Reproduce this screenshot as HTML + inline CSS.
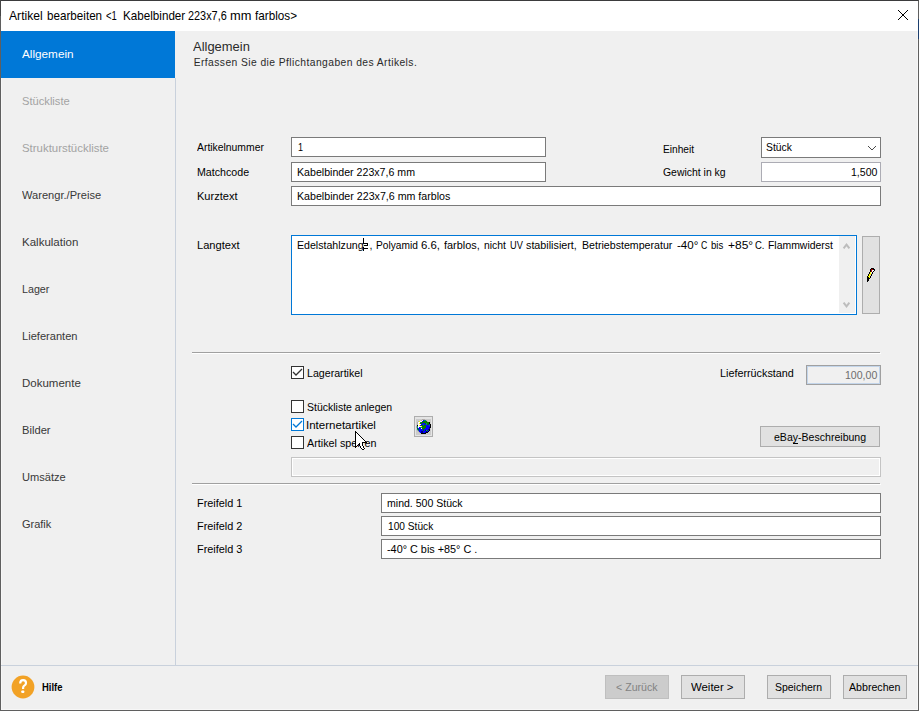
<!DOCTYPE html>
<html><head><meta charset="utf-8">
<style>
html,body{margin:0;padding:0;width:919px;height:711px;overflow:hidden;background:#f0f0f0;font-family:"Liberation Sans",sans-serif;}
.a{position:absolute;box-sizing:border-box;}
.t{position:absolute;white-space:pre;transform-origin:0 0;}
</style></head><body>
<!-- window border -->
<div class="a" style="left:0;top:0;width:919px;height:711px;border:1px solid #5f5f5f;border-top-color:#3b3b3d;background:#f0f0f0"></div>
<div class="a" style="left:0;top:0;width:1px;height:16px;background:#454545"></div>
<div class="a" style="left:1px;top:78px;width:1px;height:632px;background:#f7f7f7"></div>
<div class="a" style="left:917px;top:31px;width:1px;height:679px;background:#f7f7f7"></div>
<div class="a" style="left:1px;top:709px;width:917px;height:1px;background:#f7f7f7"></div>
<div class="a" style="left:918px;top:19px;width:1px;height:20px;background:#1d3f6e"></div>
<!-- title bar -->
<div class="a" style="left:1px;top:1px;width:917px;height:30px;background:#fff"></div>
<!-- close X -->
<svg class="a" style="left:898px;top:10px" width="10" height="10" viewBox="0 0 10 10" shape-rendering="crispEdges"><rect x="0" y="0" width="1" height="1" fill="#000000"/><rect x="9" y="0" width="1" height="1" fill="#000000"/><rect x="1" y="1" width="1" height="1" fill="#000000"/><rect x="8" y="1" width="1" height="1" fill="#000000"/><rect x="2" y="2" width="1" height="1" fill="#000000"/><rect x="7" y="2" width="1" height="1" fill="#000000"/><rect x="3" y="3" width="1" height="1" fill="#000000"/><rect x="6" y="3" width="1" height="1" fill="#000000"/><rect x="4" y="4" width="2" height="1" fill="#000000"/><rect x="4" y="5" width="2" height="1" fill="#000000"/><rect x="3" y="6" width="1" height="1" fill="#000000"/><rect x="6" y="6" width="1" height="1" fill="#000000"/><rect x="2" y="7" width="1" height="1" fill="#000000"/><rect x="7" y="7" width="1" height="1" fill="#000000"/><rect x="1" y="8" width="1" height="1" fill="#000000"/><rect x="8" y="8" width="1" height="1" fill="#000000"/><rect x="0" y="9" width="1" height="1" fill="#000000"/><rect x="9" y="9" width="1" height="1" fill="#000000"/></svg>
<!-- sidebar -->
<div class="a" style="left:1px;top:31px;width:174px;height:47px;background:#0078d7"></div>
<div class="a" style="left:175px;top:78px;width:1px;height:587px;background:#c9d1dc"></div>
<!-- bottom separator -->
<div class="a" style="left:1px;top:665px;width:917px;height:1px;background:#c9d1dc"></div>

<!-- inputs -->
<div class="a" style="left:291px;top:137px;width:255px;height:20px;border:1px solid #7a7a7a;background:#fff"></div>
<div class="a" style="left:291px;top:162px;width:255px;height:20px;border:1px solid #7a7a7a;background:#fff"></div>
<div class="a" style="left:291px;top:186px;width:590px;height:20px;border:1px solid #7a7a7a;background:#fff"></div>
<!-- dropdown -->
<div class="a" style="left:761px;top:137px;width:120px;height:21px;border:1px solid #7a7a7a;background:#fff"></div>
<svg class="a" style="left:868px;top:146px" width="8" height="4" viewBox="0 0 8 4" shape-rendering="crispEdges"><rect x="0" y="0" width="1" height="1" fill="#4a4a4a"/><rect x="7" y="0" width="1" height="1" fill="#4a4a4a"/><rect x="1" y="1" width="1" height="1" fill="#4a4a4a"/><rect x="6" y="1" width="1" height="1" fill="#4a4a4a"/><rect x="2" y="2" width="1" height="1" fill="#4a4a4a"/><rect x="5" y="2" width="1" height="1" fill="#4a4a4a"/><rect x="3" y="3" width="2" height="1" fill="#4a4a4a"/></svg>
<!-- gewicht -->
<div class="a" style="left:761px;top:162px;width:120px;height:20px;border:1px solid #acacb4;background:#fff"></div>
<!-- langtext -->
<div class="a" style="left:291px;top:235px;width:566px;height:80px;border:1px solid #0078d7;background:#fff"></div>
<div class="a" style="left:839px;top:236px;width:16px;height:77px;background:#f0f0f0"></div>
<svg class="a" style="left:839px;top:236px" width="17" height="78" viewBox="0 0 17 78"><path d="M4.6 12.3 L7.5 8.6 L10.4 12.3" stroke="#bdbdbd" stroke-width="2" fill="none"/><path d="M4.6 66.7 L7.5 70.4 L10.4 66.7" stroke="#bdbdbd" stroke-width="2" fill="none"/></svg>
<!-- I-beam -->

<!-- pencil button -->
<div class="a" style="left:862px;top:236px;width:18px;height:78px;border:1px solid #adadad;background:#e1e1e1"></div>
<svg class="a" style="left:867px;top:268px" width="8" height="14" viewBox="0 0 8 14" shape-rendering="crispEdges"><rect x="4" y="0" width="3" height="1" fill="#000000"/><rect x="3" y="1" width="1" height="1" fill="#000000"/><rect x="4" y="1" width="2" height="1" fill="#a00000"/><rect x="6" y="1" width="2" height="1" fill="#000000"/><rect x="3" y="2" width="1" height="1" fill="#000000"/><rect x="4" y="2" width="1" height="1" fill="#a00000"/><rect x="5" y="2" width="2" height="1" fill="#ffffff"/><rect x="7" y="2" width="1" height="1" fill="#000000"/><rect x="3" y="3" width="1" height="1" fill="#000000"/><rect x="4" y="3" width="1" height="1" fill="#a00000"/><rect x="5" y="3" width="1" height="1" fill="#ffffff"/><rect x="6" y="3" width="1" height="1" fill="#000000"/><rect x="2" y="4" width="1" height="1" fill="#000000"/><rect x="3" y="4" width="1" height="1" fill="#ffff00"/><rect x="4" y="4" width="1" height="1" fill="#ffffff"/><rect x="5" y="4" width="1" height="1" fill="#000000"/><rect x="2" y="5" width="1" height="1" fill="#000000"/><rect x="3" y="5" width="1" height="1" fill="#ffff00"/><rect x="4" y="5" width="1" height="1" fill="#c8c8e8"/><rect x="5" y="5" width="1" height="1" fill="#000000"/><rect x="1" y="6" width="1" height="1" fill="#000000"/><rect x="2" y="6" width="2" height="1" fill="#ffff00"/><rect x="4" y="6" width="1" height="1" fill="#000000"/><rect x="1" y="7" width="1" height="1" fill="#000000"/><rect x="2" y="7" width="1" height="1" fill="#ffff00"/><rect x="3" y="7" width="1" height="1" fill="#c8c8e8"/><rect x="4" y="7" width="1" height="1" fill="#000000"/><rect x="0" y="8" width="1" height="1" fill="#000000"/><rect x="1" y="8" width="2" height="1" fill="#ffff00"/><rect x="3" y="8" width="1" height="1" fill="#000000"/><rect x="0" y="9" width="2" height="1" fill="#000000"/><rect x="2" y="9" width="1" height="1" fill="#ffff00"/><rect x="3" y="9" width="1" height="1" fill="#000000"/><rect x="0" y="10" width="3" height="1" fill="#000000"/><rect x="0" y="11" width="2" height="1" fill="#000000"/><rect x="0" y="12" width="2" height="1" fill="#000000"/><rect x="0" y="13" width="1" height="1" fill="#000000"/></svg>

<!-- separator 1 -->
<div class="a" style="left:192px;top:352px;width:688px;height:1px;background:#a0a0a0"></div>
<div class="a" style="left:192px;top:353px;width:689px;height:1px;background:#fff"></div>

<!-- checkboxes -->
<div class="a" style="left:291px;top:366px;width:13px;height:13px;border:1px solid #333;background:#fff"></div>
<svg class="a" style="left:291px;top:366px" width="13" height="13" viewBox="0 0 13 13"><path d="M2 6 L5 9 L11 3" stroke="#333" stroke-width="1.3" fill="none"/></svg>
<div class="a" style="left:291px;top:400px;width:13px;height:13px;border:1px solid #333;background:#fff"></div>
<div class="a" style="left:291px;top:418px;width:13px;height:13px;border:1px solid #0078d7;background:#fff"></div>
<svg class="a" style="left:291px;top:418px" width="13" height="13" viewBox="0 0 13 13"><path d="M2 6 L5 9 L11 3" stroke="#0078d7" stroke-width="1.3" fill="none"/></svg>
<div class="a" style="left:291px;top:436px;width:13px;height:13px;border:1px solid #333;background:#fff"></div>

<!-- globe button -->
<div class="a" style="left:414px;top:416px;width:19px;height:21px;border:1px solid #adadad;background:#e4e4e4"></div><div class="a" style="left:416px;top:419px;width:15px;height:16px;background:#cbcbcb"></div><svg class="a" style="left:416px;top:419px" width="15" height="15" viewBox="0 0 15 15" shape-rendering="crispEdges"><rect x="6" y="0" width="3" height="1" fill="#b0aaa8"/><rect x="5" y="1" width="1" height="1" fill="#b0aaa8"/><rect x="6" y="1" width="1" height="1" fill="#ffffff"/><rect x="7" y="1" width="1" height="1" fill="#0000ff"/><rect x="8" y="1" width="2" height="1" fill="#008080"/><rect x="10" y="1" width="1" height="1" fill="#b0aaa8"/><rect x="2" y="2" width="1" height="1" fill="#b0aaa8"/><rect x="3" y="2" width="1" height="1" fill="#ffff00"/><rect x="4" y="2" width="2" height="1" fill="#ffffff"/><rect x="6" y="2" width="1" height="1" fill="#0000ff"/><rect x="7" y="2" width="4" height="1" fill="#008000"/><rect x="11" y="2" width="1" height="1" fill="#b0aaa8"/><rect x="1" y="3" width="1" height="1" fill="#b0aaa8"/><rect x="2" y="3" width="2" height="1" fill="#ffffff"/><rect x="4" y="3" width="1" height="1" fill="#008080"/><rect x="5" y="3" width="8" height="1" fill="#008000"/><rect x="13" y="3" width="1" height="1" fill="#000000"/><rect x="1" y="4" width="1" height="1" fill="#b0aaa8"/><rect x="2" y="4" width="1" height="1" fill="#ffffff"/><rect x="3" y="4" width="1" height="1" fill="#ffff00"/><rect x="4" y="4" width="2" height="1" fill="#008000"/><rect x="6" y="4" width="3" height="1" fill="#0000ff"/><rect x="9" y="4" width="1" height="1" fill="#008000"/><rect x="10" y="4" width="1" height="1" fill="#008080"/><rect x="11" y="4" width="2" height="1" fill="#008000"/><rect x="13" y="4" width="1" height="1" fill="#000000"/><rect x="1" y="5" width="1" height="1" fill="#b0aaa8"/><rect x="2" y="5" width="3" height="1" fill="#ffffff"/><rect x="5" y="5" width="2" height="1" fill="#0000ff"/><rect x="7" y="5" width="1" height="1" fill="#008080"/><rect x="8" y="5" width="2" height="1" fill="#0000ff"/><rect x="10" y="5" width="1" height="1" fill="#008080"/><rect x="11" y="5" width="2" height="1" fill="#008000"/><rect x="13" y="5" width="1" height="1" fill="#0000ff"/><rect x="14" y="5" width="1" height="1" fill="#000000"/><rect x="1" y="6" width="1" height="1" fill="#000000"/><rect x="2" y="6" width="1" height="1" fill="#ffffff"/><rect x="3" y="6" width="1" height="1" fill="#ffff00"/><rect x="4" y="6" width="1" height="1" fill="#0000ff"/><rect x="5" y="6" width="2" height="1" fill="#008000"/><rect x="7" y="6" width="1" height="1" fill="#0000ff"/><rect x="8" y="6" width="2" height="1" fill="#008000"/><rect x="10" y="6" width="3" height="1" fill="#0000ff"/><rect x="13" y="6" width="1" height="1" fill="#008080"/><rect x="14" y="6" width="1" height="1" fill="#000000"/><rect x="0" y="7" width="1" height="1" fill="#b0aaa8"/><rect x="1" y="7" width="1" height="1" fill="#008080"/><rect x="2" y="7" width="3" height="1" fill="#ffffff"/><rect x="5" y="7" width="1" height="1" fill="#ffff00"/><rect x="6" y="7" width="4" height="1" fill="#008000"/><rect x="10" y="7" width="4" height="1" fill="#0000ff"/><rect x="14" y="7" width="1" height="1" fill="#000000"/><rect x="0" y="8" width="1" height="1" fill="#b0aaa8"/><rect x="1" y="8" width="1" height="1" fill="#008080"/><rect x="2" y="8" width="1" height="1" fill="#ffffff"/><rect x="3" y="8" width="1" height="1" fill="#0000ff"/><rect x="4" y="8" width="2" height="1" fill="#008080"/><rect x="6" y="8" width="4" height="1" fill="#008000"/><rect x="10" y="8" width="3" height="1" fill="#0000ff"/><rect x="13" y="8" width="1" height="1" fill="#000080"/><rect x="14" y="8" width="1" height="1" fill="#000000"/><rect x="1" y="9" width="1" height="1" fill="#008000"/><rect x="2" y="9" width="3" height="1" fill="#0000ff"/><rect x="5" y="9" width="1" height="1" fill="#ffffff"/><rect x="6" y="9" width="3" height="1" fill="#008000"/><rect x="9" y="9" width="4" height="1" fill="#0000ff"/><rect x="13" y="9" width="1" height="1" fill="#000080"/><rect x="1" y="10" width="1" height="1" fill="#008080"/><rect x="2" y="10" width="1" height="1" fill="#008000"/><rect x="3" y="10" width="4" height="1" fill="#0000ff"/><rect x="7" y="10" width="1" height="1" fill="#008000"/><rect x="8" y="10" width="4" height="1" fill="#0000ff"/><rect x="12" y="10" width="1" height="1" fill="#000080"/><rect x="13" y="10" width="1" height="1" fill="#000000"/><rect x="1" y="11" width="1" height="1" fill="#b0aaa8"/><rect x="2" y="11" width="1" height="1" fill="#008080"/><rect x="3" y="11" width="4" height="1" fill="#0000ff"/><rect x="7" y="11" width="1" height="1" fill="#008000"/><rect x="8" y="11" width="1" height="1" fill="#0000ff"/><rect x="9" y="11" width="1" height="1" fill="#000080"/><rect x="10" y="11" width="1" height="1" fill="#008080"/><rect x="11" y="11" width="1" height="1" fill="#008000"/><rect x="12" y="11" width="1" height="1" fill="#0000ff"/><rect x="13" y="11" width="1" height="1" fill="#000000"/><rect x="2" y="12" width="1" height="1" fill="#b0aaa8"/><rect x="3" y="12" width="2" height="1" fill="#0000ff"/><rect x="5" y="12" width="2" height="1" fill="#000080"/><rect x="7" y="12" width="3" height="1" fill="#0000ff"/><rect x="10" y="12" width="1" height="1" fill="#000080"/><rect x="11" y="12" width="1" height="1" fill="#0000ff"/><rect x="12" y="12" width="1" height="1" fill="#000000"/><rect x="3" y="13" width="1" height="1" fill="#b0aaa8"/><rect x="4" y="13" width="1" height="1" fill="#0000ff"/><rect x="5" y="13" width="2" height="1" fill="#000080"/><rect x="7" y="13" width="2" height="1" fill="#0000ff"/><rect x="9" y="13" width="1" height="1" fill="#000080"/><rect x="10" y="13" width="2" height="1" fill="#000000"/><rect x="5" y="14" width="5" height="1" fill="#000000"/></svg>
<!-- lieferrueckstand -->
<div class="a" style="left:806px;top:365px;width:75px;height:20px;border:1px solid #a0a0a0;background:#f0f0f0;box-shadow:inset 0 0 0 1px #c3d5ea"></div>
<!-- ebay button -->
<div class="a" style="left:760px;top:426px;width:120px;height:21px;border:1px solid #adadad;background:#e1e1e1"></div>
<div class="a" style="left:793px;top:443px;width:5px;height:1px;background:#000"></div>
<!-- progress box -->
<div class="a" style="left:291px;top:457px;width:590px;height:20px;border:1px solid #c4c4c4;background:#f0f0f0;box-shadow:inset 0 0 0 1px #fff"></div>
<!-- separator 2 -->
<div class="a" style="left:192px;top:483px;width:688px;height:1px;background:#a0a0a0"></div>
<div class="a" style="left:192px;top:484px;width:689px;height:1px;background:#fff"></div>
<!-- freifeld boxes -->
<div class="a" style="left:381px;top:493px;width:500px;height:20px;border:1px solid #7a7a7a;background:#fff"></div>
<div class="a" style="left:381px;top:516px;width:500px;height:20px;border:1px solid #7a7a7a;background:#fff"></div>
<div class="a" style="left:381px;top:539px;width:500px;height:20px;border:1px solid #7a7a7a;background:#fff"></div>

<!-- help icon -->
<svg class="a" style="left:11px;top:675px" width="24" height="24" viewBox="0 0 24 24"><circle cx="12" cy="12" r="11.4" fill="#f2a226"/><path d="M9.2 8.4 Q9.2 5.2 12.1 5.2 Q15 5.2 15 7.9 Q15 9.6 13.3 10.6 Q12.1 11.3 12.1 12.9 L12.1 13.9" stroke="#fff" stroke-width="2.2" fill="none"/><rect x="10.3" y="15.4" width="3" height="2.6" rx="0.8" fill="#fff"/></svg>

<!-- bottom buttons -->
<div class="a" style="left:605px;top:675px;width:64px;height:24px;border:1px solid #bfbfbf;background:#cccccc"></div>
<div class="a" style="left:681px;top:675px;width:64px;height:24px;border:1px solid #adadad;background:#e1e1e1"></div>
<div class="a" style="left:767px;top:675px;width:64px;height:24px;border:1px solid #adadad;background:#e1e1e1"></div>
<div class="a" style="left:843px;top:675px;width:64px;height:24px;border:1px solid #adadad;background:#e1e1e1"></div>

<div class="t" style="left:9.20px;top:9.75px;font-size:12.1px;line-height:12.1px;color:#000;font-weight:400;transform:scaleX(1.0026);">Artikel</div>
<div class="t" style="left:47.10px;top:9.75px;font-size:12.1px;line-height:12.1px;color:#000;font-weight:400;transform:scaleX(0.9640);">bearbeiten</div>
<div class="t" style="left:105.70px;top:9.75px;font-size:12.1px;line-height:12.1px;color:#000;font-weight:400;transform:scaleX(0.7822);">&lt;1</div>
<div class="t" style="left:122.80px;top:9.75px;font-size:12.1px;line-height:12.1px;color:#000;font-weight:400;transform:scaleX(0.9640);">Kabelbinder</div>
<div class="t" style="left:188.00px;top:9.75px;font-size:12.1px;line-height:12.1px;color:#000;font-weight:400;transform:scaleX(0.9005);">223x7,6</div>
<div class="t" style="left:230.30px;top:9.75px;font-size:12.1px;line-height:12.1px;color:#000;font-weight:400;transform:scaleX(1.0611);">mm</div>
<div class="t" style="left:255.00px;top:9.75px;font-size:12.1px;line-height:12.1px;color:#000;font-weight:400;transform:scaleX(0.9677);">farblos&gt;</div>
<div class="t" style="left:22.20px;top:48.18px;font-size:11.6px;line-height:11.6px;color:#fff;font-weight:400;transform:scaleX(1.0127);">Allgemein</div>
<div class="t" style="left:22.10px;top:95.18px;font-size:11.6px;line-height:11.6px;color:#a3a3a3;font-weight:400;transform:scaleX(0.9621);">Stückliste</div>
<div class="t" style="left:22.10px;top:142.18px;font-size:11.6px;line-height:11.6px;color:#a3a3a3;font-weight:400;transform:scaleX(0.9850);">Strukturstückliste</div>
<div class="t" style="left:22.10px;top:189.18px;font-size:11.6px;line-height:11.6px;color:#383838;font-weight:400;transform:scaleX(0.9569);">Warengr./Preise</div>
<div class="t" style="left:22.10px;top:236.18px;font-size:11.6px;line-height:11.6px;color:#383838;font-weight:400;transform:scaleX(0.9934);">Kalkulation</div>
<div class="t" style="left:22.10px;top:283.18px;font-size:11.6px;line-height:11.6px;color:#383838;font-weight:400;transform:scaleX(0.9231);">Lager</div>
<div class="t" style="left:22.10px;top:330.18px;font-size:11.6px;line-height:11.6px;color:#383838;font-weight:400;transform:scaleX(0.9572);">Lieferanten</div>
<div class="t" style="left:22.10px;top:377.18px;font-size:11.6px;line-height:11.6px;color:#383838;font-weight:400;transform:scaleX(0.9925);">Dokumente</div>
<div class="t" style="left:22.10px;top:424.18px;font-size:11.6px;line-height:11.6px;color:#383838;font-weight:400;transform:scaleX(0.9637);">Bilder</div>
<div class="t" style="left:22.30px;top:471.18px;font-size:11.6px;line-height:11.6px;color:#383838;font-weight:400;transform:scaleX(0.9560);">Umsätze</div>
<div class="t" style="left:22.10px;top:518.18px;font-size:11.6px;line-height:11.6px;color:#383838;font-weight:400;transform:scaleX(0.9478);">Grafik</div>
<div class="t" style="left:193.20px;top:40.67px;font-size:12.2px;line-height:12.2px;color:#2a2a2a;font-weight:400;transform:scaleX(1.0618);">Allgemein</div>
<div class="t" style="left:193.70px;top:58.08px;font-size:10.3px;line-height:10.3px;color:#2a2a2a;font-weight:400;letter-spacing:0.426px;">Erfassen Sie die Pflichtangaben des Artikels.</div>
<div class="t" style="left:196.90px;top:141.18px;font-size:11.6px;line-height:11.6px;color:#000;font-weight:400;transform:scaleX(0.8949);">Artikelnummer</div>
<div class="t" style="left:196.60px;top:166.18px;font-size:11.6px;line-height:11.6px;color:#000;font-weight:400;transform:scaleX(0.9189);">Matchcode</div>
<div class="t" style="left:196.60px;top:190.18px;font-size:11.6px;line-height:11.6px;color:#000;font-weight:400;transform:scaleX(0.9537);">Kurztext</div>
<div class="t" style="left:662.80px;top:143.18px;font-size:11.6px;line-height:11.6px;color:#000;font-weight:400;transform:scaleX(0.8778);">Einheit</div>
<div class="t" style="left:662.80px;top:166.18px;font-size:11.6px;line-height:11.6px;color:#000;font-weight:400;transform:scaleX(0.8996);">Gewicht in kg</div>
<div class="t" style="left:196.50px;top:239.18px;font-size:11.6px;line-height:11.6px;color:#000;font-weight:400;transform:scaleX(0.9590);">Langtext</div>
<div class="t" style="left:307.00px;top:367.18px;font-size:11.6px;line-height:11.6px;color:#000;font-weight:400;transform:scaleX(0.9166);">Lagerartikel</div>
<div class="t" style="left:307.00px;top:401.18px;font-size:11.6px;line-height:11.6px;color:#000;font-weight:400;transform:scaleX(0.9055);">Stückliste anlegen</div>
<div class="t" style="left:306.01px;top:419.18px;font-size:11.6px;line-height:11.6px;color:#000;font-weight:400;transform:scaleX(0.9947);">Internetartikel</div>
<div class="t" style="left:307.00px;top:437.18px;font-size:11.6px;line-height:11.6px;color:#000;font-weight:400;transform:scaleX(0.9287);">Artikel sperren</div>
<div class="t" style="left:719.60px;top:367.18px;font-size:11.6px;line-height:11.6px;color:#000;font-weight:400;transform:scaleX(0.9313);">Lieferrückstand</div>
<div class="t" style="left:196.70px;top:497.18px;font-size:11.6px;line-height:11.6px;color:#000;font-weight:400;transform:scaleX(0.9398);">Freifeld 1</div>
<div class="t" style="left:196.70px;top:520.18px;font-size:11.6px;line-height:11.6px;color:#000;font-weight:400;transform:scaleX(0.9398);">Freifeld 2</div>
<div class="t" style="left:196.70px;top:543.18px;font-size:11.6px;line-height:11.6px;color:#000;font-weight:400;transform:scaleX(0.9398);">Freifeld 3</div>
<div class="t" style="left:298.00px;top:141.18px;font-size:11.6px;line-height:11.6px;color:#000;font-weight:400;transform:scaleX(0.7833);">1</div>
<div class="t" style="left:296.50px;top:166.18px;font-size:11.6px;line-height:11.6px;color:#000;font-weight:400;transform:scaleX(0.9155);">Kabelbinder 223x7,6 mm</div>
<div class="t" style="left:296.50px;top:190.18px;font-size:11.6px;line-height:11.6px;color:#000;font-weight:400;transform:scaleX(0.9185);">Kabelbinder 223x7,6 mm farblos</div>
<div class="t" style="left:766.20px;top:141.18px;font-size:11.6px;line-height:11.6px;color:#000;font-weight:400;transform:scaleX(0.8939);">Stück</div>
<div class="t" style="left:851.00px;top:166.18px;font-size:11.6px;line-height:11.6px;color:#000;font-weight:400;transform:scaleX(0.9102);">1,500</div>
<div class="t" style="left:296.60px;top:239.18px;font-size:11.6px;line-height:11.6px;color:#000;font-weight:400;transform:scaleX(0.9139);">Edelstahlzunge,</div>
<div class="t" style="left:375.70px;top:239.18px;font-size:11.6px;line-height:11.6px;color:#000;font-weight:400;transform:scaleX(0.8765);">Polyamid</div>
<div class="t" style="left:420.90px;top:239.18px;font-size:11.6px;line-height:11.6px;color:#000;font-weight:400;transform:scaleX(0.9834);">6.6,</div>
<div class="t" style="left:443.50px;top:239.18px;font-size:11.6px;line-height:11.6px;color:#000;font-weight:400;transform:scaleX(0.9392);">farblos,</div>
<div class="t" style="left:483.70px;top:239.18px;font-size:11.6px;line-height:11.6px;color:#000;font-weight:400;transform:scaleX(0.8944);">nicht</div>
<div class="t" style="left:509.70px;top:239.18px;font-size:11.6px;line-height:11.6px;color:#000;font-weight:400;transform:scaleX(0.7940);">UV</div>
<div class="t" style="left:525.80px;top:239.18px;font-size:11.6px;line-height:11.6px;color:#000;font-weight:400;transform:scaleX(0.9277);">stabilisiert,</div>
<div class="t" style="left:581.70px;top:239.18px;font-size:11.6px;line-height:11.6px;color:#000;font-weight:400;transform:scaleX(0.9166);">Betriebstemperatur</div>
<div class="t" style="left:677.40px;top:239.18px;font-size:11.6px;line-height:11.6px;color:#000;font-weight:400;transform:scaleX(0.9973);">-40°</div>
<div class="t" style="left:700.80px;top:239.18px;font-size:11.6px;line-height:11.6px;color:#000;font-weight:400;transform:scaleX(0.7500);">C</div>
<div class="t" style="left:710.60px;top:239.18px;font-size:11.6px;line-height:11.6px;color:#000;font-weight:400;transform:scaleX(0.8320);">bis</div>
<div class="t" style="left:728.00px;top:239.18px;font-size:11.6px;line-height:11.6px;color:#000;font-weight:400;transform:scaleX(1.0352);">+85°</div>
<div class="t" style="left:755.20px;top:239.18px;font-size:11.6px;line-height:11.6px;color:#000;font-weight:400;transform:scaleX(0.8178);">C.</div>
<div class="t" style="left:767.80px;top:239.18px;font-size:11.6px;line-height:11.6px;color:#000;font-weight:400;transform:scaleX(0.8996);">Flammwiderst</div>
<div class="t" style="left:845.00px;top:369.18px;font-size:11.6px;line-height:11.6px;color:#6d6d6d;font-weight:400;transform:scaleX(0.9111);">100,00</div>
<div class="t" style="left:773.60px;top:431.18px;font-size:11.6px;line-height:11.6px;color:#000;font-weight:400;transform:scaleX(0.9103);">eBay-Beschreibung</div>
<div class="t" style="left:386.50px;top:497.18px;font-size:11.6px;line-height:11.6px;color:#000;font-weight:400;transform:scaleX(0.9096);">mind. 500 Stück</div>
<div class="t" style="left:388.10px;top:520.18px;font-size:11.6px;line-height:11.6px;color:#000;font-weight:400;transform:scaleX(0.8771);">100 Stück</div>
<div class="t" style="left:387.20px;top:543.18px;font-size:11.6px;line-height:11.6px;color:#000;font-weight:400;transform:scaleX(0.9350);">-40° C bis +85° C .</div>
<div class="t" style="left:42.20px;top:681.18px;font-size:11.6px;line-height:11.6px;color:#000;font-weight:700;transform:scaleX(0.8140);">Hilfe</div>
<div class="t" style="left:615.70px;top:681.18px;font-size:11.6px;line-height:11.6px;color:#838383;font-weight:400;transform:scaleX(0.9161);">&lt; Zurück</div>
<div class="t" style="left:690.50px;top:681.18px;font-size:11.6px;line-height:11.6px;color:#000;font-weight:400;transform:scaleX(0.9814);">Weiter &gt;</div>
<div class="t" style="left:774.70px;top:681.18px;font-size:11.6px;line-height:11.6px;color:#000;font-weight:400;transform:scaleX(0.9023);">Speichern</div>
<div class="t" style="left:849.10px;top:681.18px;font-size:11.6px;line-height:11.6px;color:#000;font-weight:400;transform:scaleX(0.9168);">Abbrechen</div>

<!-- I-beam xor -->
<div class="a" style="left:364px;top:241px;width:5px;height:8px;background:#fff"></div>
<svg class="a" style="left:363px;top:238px" width="6" height="13" viewBox="0 0 6 13" shape-rendering="crispEdges"><rect x="0" y="0" width="1" height="1" fill="#000000"/><rect x="0" y="1" width="1" height="1" fill="#000000"/><rect x="0" y="2" width="1" height="1" fill="#000000"/><rect x="0" y="3" width="1" height="1" fill="#000000"/><rect x="0" y="4" width="1" height="1" fill="#000000"/><rect x="0" y="5" width="5" height="1" fill="#000000"/><rect x="4" y="6" width="1" height="1" fill="#000000"/><rect x="1" y="7" width="4" height="1" fill="#000000"/><rect x="0" y="9" width="1" height="1" fill="#000000"/><rect x="0" y="10" width="5" height="1" fill="#000000"/><rect x="0" y="11" width="1" height="1" fill="#000000"/><rect x="0" y="12" width="1" height="1" fill="#000000"/></svg>
<!-- mouse cursor -->
<svg class="a" style="left:355px;top:431px" width="12" height="19" viewBox="0 0 12 19" shape-rendering="crispEdges"><rect x="0" y="0" width="1" height="1" fill="#000000"/><rect x="0" y="1" width="2" height="1" fill="#000000"/><rect x="0" y="2" width="1" height="1" fill="#000000"/><rect x="1" y="2" width="1" height="1" fill="#ffffff"/><rect x="2" y="2" width="1" height="1" fill="#000000"/><rect x="0" y="3" width="1" height="1" fill="#000000"/><rect x="1" y="3" width="2" height="1" fill="#ffffff"/><rect x="3" y="3" width="1" height="1" fill="#000000"/><rect x="0" y="4" width="1" height="1" fill="#000000"/><rect x="1" y="4" width="3" height="1" fill="#ffffff"/><rect x="4" y="4" width="1" height="1" fill="#000000"/><rect x="0" y="5" width="1" height="1" fill="#000000"/><rect x="1" y="5" width="4" height="1" fill="#ffffff"/><rect x="5" y="5" width="1" height="1" fill="#000000"/><rect x="0" y="6" width="1" height="1" fill="#000000"/><rect x="1" y="6" width="5" height="1" fill="#ffffff"/><rect x="6" y="6" width="1" height="1" fill="#000000"/><rect x="0" y="7" width="1" height="1" fill="#000000"/><rect x="1" y="7" width="6" height="1" fill="#ffffff"/><rect x="7" y="7" width="1" height="1" fill="#000000"/><rect x="0" y="8" width="1" height="1" fill="#000000"/><rect x="1" y="8" width="7" height="1" fill="#ffffff"/><rect x="8" y="8" width="1" height="1" fill="#000000"/><rect x="0" y="9" width="1" height="1" fill="#000000"/><rect x="1" y="9" width="8" height="1" fill="#ffffff"/><rect x="9" y="9" width="1" height="1" fill="#000000"/><rect x="0" y="10" width="1" height="1" fill="#000000"/><rect x="1" y="10" width="9" height="1" fill="#ffffff"/><rect x="10" y="10" width="1" height="1" fill="#000000"/><rect x="0" y="11" width="1" height="1" fill="#000000"/><rect x="1" y="11" width="6" height="1" fill="#ffffff"/><rect x="7" y="11" width="5" height="1" fill="#000000"/><rect x="0" y="12" width="1" height="1" fill="#000000"/><rect x="1" y="12" width="3" height="1" fill="#ffffff"/><rect x="4" y="12" width="1" height="1" fill="#000000"/><rect x="5" y="12" width="2" height="1" fill="#ffffff"/><rect x="7" y="12" width="1" height="1" fill="#000000"/><rect x="0" y="13" width="1" height="1" fill="#000000"/><rect x="1" y="13" width="2" height="1" fill="#ffffff"/><rect x="3" y="13" width="2" height="1" fill="#000000"/><rect x="5" y="13" width="2" height="1" fill="#ffffff"/><rect x="7" y="13" width="1" height="1" fill="#000000"/><rect x="0" y="14" width="1" height="1" fill="#000000"/><rect x="1" y="14" width="1" height="1" fill="#ffffff"/><rect x="2" y="14" width="1" height="1" fill="#000000"/><rect x="4" y="14" width="1" height="1" fill="#000000"/><rect x="5" y="14" width="2" height="1" fill="#ffffff"/><rect x="7" y="14" width="1" height="1" fill="#000000"/><rect x="0" y="15" width="2" height="1" fill="#000000"/><rect x="5" y="15" width="1" height="1" fill="#000000"/><rect x="6" y="15" width="2" height="1" fill="#ffffff"/><rect x="8" y="15" width="1" height="1" fill="#000000"/><rect x="0" y="16" width="1" height="1" fill="#000000"/><rect x="5" y="16" width="1" height="1" fill="#000000"/><rect x="6" y="16" width="2" height="1" fill="#ffffff"/><rect x="8" y="16" width="1" height="1" fill="#000000"/><rect x="6" y="17" width="1" height="1" fill="#000000"/><rect x="7" y="17" width="2" height="1" fill="#ffffff"/><rect x="9" y="17" width="1" height="1" fill="#000000"/><rect x="7" y="18" width="2" height="1" fill="#000000"/></svg>
</body></html>
